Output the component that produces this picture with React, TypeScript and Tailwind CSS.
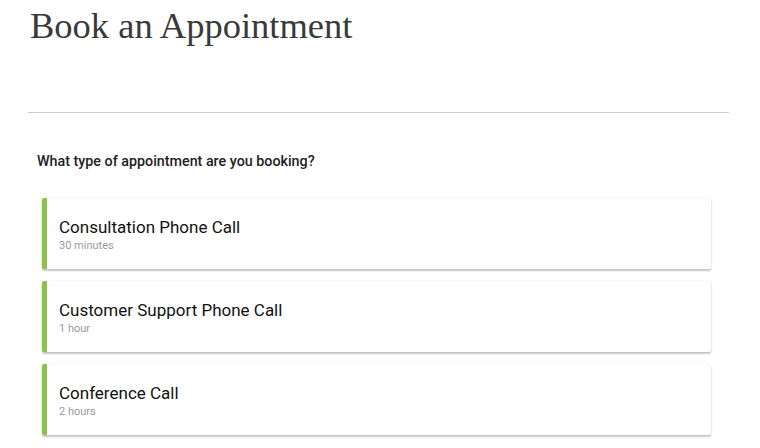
const types = [
  { title: "Consultation Phone Call", length: "30 minutes" },
  { title: "Customer Support Phone Call", length: "1 hour" },
  { title: "Conference Call", length: "2 hours" },
];

const App = () => {
  return (
    <div className="bg-white min-h-screen w-[760px] h-[448px] overflow-hidden">
      <div className="ml-[28px] w-[701px] pt-[8px]">
        <h1 className="ml-[2px] h-[37px] font-['Liberation_Serif',serif] text-[36.5px] leading-none text-[#3a3a3a]">
          Book an Appointment
        </h1>
        <div className="mt-[67px] h-px bg-[#cccccc]"></div>
        <p className="mt-[38px] ml-[9px] font-['Roboto',sans-serif] text-[14.3px] leading-[20px] font-medium text-[#222222]">
          What type of appointment are you booking?
        </p>
        <div className="mt-[27px] ml-[14px] w-[669px] flex flex-col gap-[12px]">
          {types.map((t) => (
            <div
              key={t.title}
              className="bg-white border-l-[5px] border-[#8bc34a] rounded-[2px] pl-[12px] pt-[18px] pb-[16px] shadow-[0_2px_2px_rgba(0,0,0,0.22),0_0_2px_rgba(0,0,0,0.1)] font-['Roboto',sans-serif]"
            >
              <p className="text-[17px] leading-[22px] text-[#111111]">{t.title}</p>
              <p className="mt-[1px] text-[11px] leading-[14px] text-[#999999]">{t.length}</p>
            </div>
          ))}
        </div>
      </div>
    </div>
  );
};

export default App;
